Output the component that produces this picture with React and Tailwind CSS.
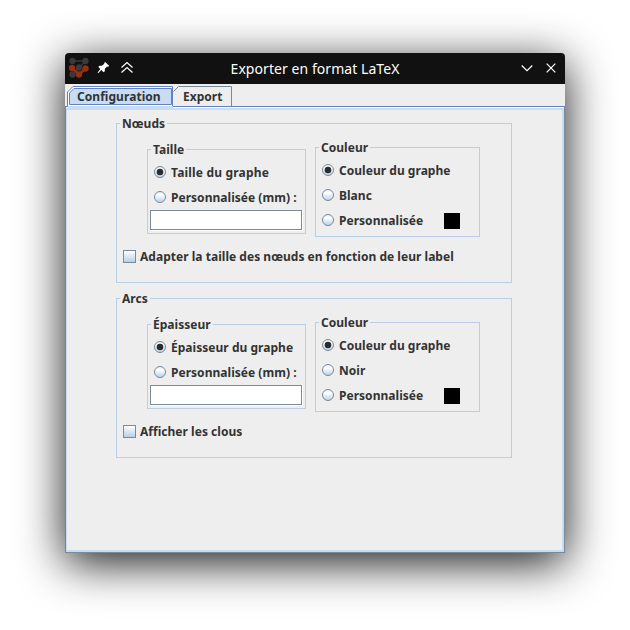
function Radio({ label, checked, wide }) {
  return (
    <div className="flex h-[25px] items-center">
      <svg width="12" height="12" viewBox="0 0 12 12" className="mb-[2px] shrink-0">
        <defs>
          <linearGradient id="metal" x1="0" y1="0" x2="0" y2="1">
            <stop offset="0" stopColor="#dfe9f4" />
            <stop offset="0.3" stopColor="#ffffff" />
            <stop offset="1" stopColor="#b8cfe5" />
          </linearGradient>
        </defs>
        <circle cx="6" cy="6" r="5.5" fill="url(#metal)" stroke="#7a8a99" />
        {checked && <circle cx="6" cy="6" r="3.3" fill="#2b2b2b" />}
      </svg>
      <span className={wide ? "ml-[5px] tracking-[0.18px]" : "ml-[5px]"}>{label}</span>
    </div>
  );
}

function Group({ title, className, children }) {
  return (
    <section className={"border border-[#b8cfe5] " + className}>
      <h2 className="-mt-[9px] ml-[3px] h-[17px] w-fit bg-[#eeeeee] px-[2px] leading-[17px]">{title}</h2>
      {children}
    </section>
  );
}

function Section({ title, sizeTitle, sizeOption, wide, plain, check }) {
  return (
    <Group title={title} className="h-[160px] w-[396px]">
      <div className="mt-[15px] flex items-start pl-[30px]">
        <Group title={sizeTitle} className="mt-[2px] h-[85px] w-[159px]">
          <div className="mt-[2px] pl-[6px]">
            <Radio label={sizeOption} checked wide={wide} />
            <Radio label="Personnalisée (mm) :" />
          </div>
          <div className="ml-[2px] h-[21px] w-[153px] border-r border-b border-white">
            <div className="h-[20px] w-[152px] border border-[#7a8a99] bg-white" />
          </div>
        </Group>
        <Group title="Couleur" className="ml-[9px] h-[90px] w-[165px]">
          <div className="mt-[2px] pl-[6px]">
            <Radio label="Couleur du graphe" checked />
            <Radio label={plain} />
            <div className="flex items-center">
              <div className="w-[122px]">
                <Radio label="Personnalisée" />
              </div>
              <div className="h-4 w-4 bg-black" />
            </div>
          </div>
        </Group>
      </div>
      <div className="mt-[11px] flex h-[17px] items-center pl-[6px]">
        <div className="h-[13px] w-[13px] border border-[#7a8a99] bg-linear-to-b from-white to-[#b8cfe5]" />
        <span className="ml-[4px]">{check}</span>
      </div>
    </Group>
  );
}

function TitleBar() {
  return (
    <header className="flex h-[31px] items-center rounded-t-[4px] bg-[#111111] text-white">
      <svg width="75" height="31" viewBox="0 0 75 31" fill="none" className="shrink-0">
        <g stroke="#3a3a3a" strokeWidth="1.5" fill="#3a3a3a">
          <path d="M7.5 8H20.5L7.5 21.5" fill="none" />
          <circle cx="7.5" cy="8" r="2.4" />
          <circle cx="20.5" cy="8" r="2.4" />
          <circle cx="14" cy="14.5" r="2.4" />
          <circle cx="7.5" cy="21.5" r="2.4" />
        </g>
        <g stroke="#983010" strokeWidth="1.5" fill="#983010">
          <path d="M7 15L14 21.5L20.5 15.5" fill="none" strokeWidth="2.5" />
          <circle cx="7" cy="15" r="2.4" />
          <circle cx="20.5" cy="15.5" r="2.4" />
          <circle cx="14" cy="21.5" r="2.4" />
        </g>
        <path d="M40.2 9L44.1 12.8L43 14L42.1 13.6L39.9 15.8L39.8 18.2L38.6 19.3L36.3 17L33.2 20.2L32.6 19.6L35.4 16.1L33.3 14L34.4 12.8L36.8 12.8L39.4 10.7L39.1 10.1Z" fill="#fff" />
        <path d="M56.5 14.5L62 9.5L67.5 14.5M56.5 19.5L62 14.5L67.5 19.5" stroke="#fff" strokeWidth="1.2" />
      </svg>
      <h1 className="flex-1 text-center text-[14px] font-normal tracking-[0.06px]">Exporter en format LaTeX</h1>
      <svg width="75" height="31" viewBox="0 0 75 31" fill="none" stroke="#fff" strokeWidth="1.2" className="shrink-0">
        <path d="M31.7 12.5L37 17.7L42.3 12.5M56.7 10.7L65.3 19.3M65.3 10.7L56.7 19.3" />
      </svg>
    </header>
  );
}

function Tabs() {
  return (
    <nav className="relative flex h-[22px] pt-[3px] leading-[20px]">
      <svg width="500" height="26" viewBox="0 0 500 26" fill="none" className="absolute top-0 left-0">
        <path d="M0 22.5H500" stroke="#6382bf" />
        <path d="M2 22V8L8 2H108V23H2Z" fill="#fff" />
        <path d="M3 22H108V26H3Z" fill="#c8ddf2" />
        <path d="M2.5 23V8L8 2.5H107.5V22" stroke="#6382bf" />
        <path d="M4.5 20.5V9L9 4.5H106.5V20.5Z" fill="#c8ddf2" stroke="#6382bf" />
        <path d="M108.5 7.5L113.5 2.5H166.5V22" stroke="#7a8a99" />
      </svg>
      <span className="relative ml-[12px] w-[106px] tracking-[0.05px]">Configuration</span>
      <span className="relative">Export</span>
    </nav>
  );
}

export default function App() {
  return (
    <main className="h-[630px] w-[630px] overflow-hidden bg-white pt-[53px] pl-[65px] font-['Noto_Sans',sans-serif] text-[12px] font-bold tracking-[0.03px] text-[#333333]">
      <div className="flex h-[500px] w-[500px] flex-col rounded-t-[4px] bg-[#eeeeee] shadow-[0_10px_46px_rgba(0,0,0,0.9)]">
        <TitleBar />
        <Tabs />
        <div className="flex-1 border-t border-r border-b border-l border-t-[#6382bf] border-r-[#7a8a99] border-b-[#7a8a99] border-l-[#6382bf]">
          <div className="h-full border-t border-white">
            <div className="flex h-full flex-col gap-[15px] border-2 border-l border-[#c8ddf2] pt-[13px] pl-[49px]">
              <Section title="Nœuds" sizeTitle="Taille" sizeOption="Taille du graphe" wide plain="Blanc" check="Adapter la taille des nœuds en fonction de leur label" />
              <Section title="Arcs" sizeTitle="Épaisseur" sizeOption="Épaisseur du graphe" plain="Noir" check="Afficher les clous" />
            </div>
          </div>
        </div>
      </div>
    </main>
  );
}
